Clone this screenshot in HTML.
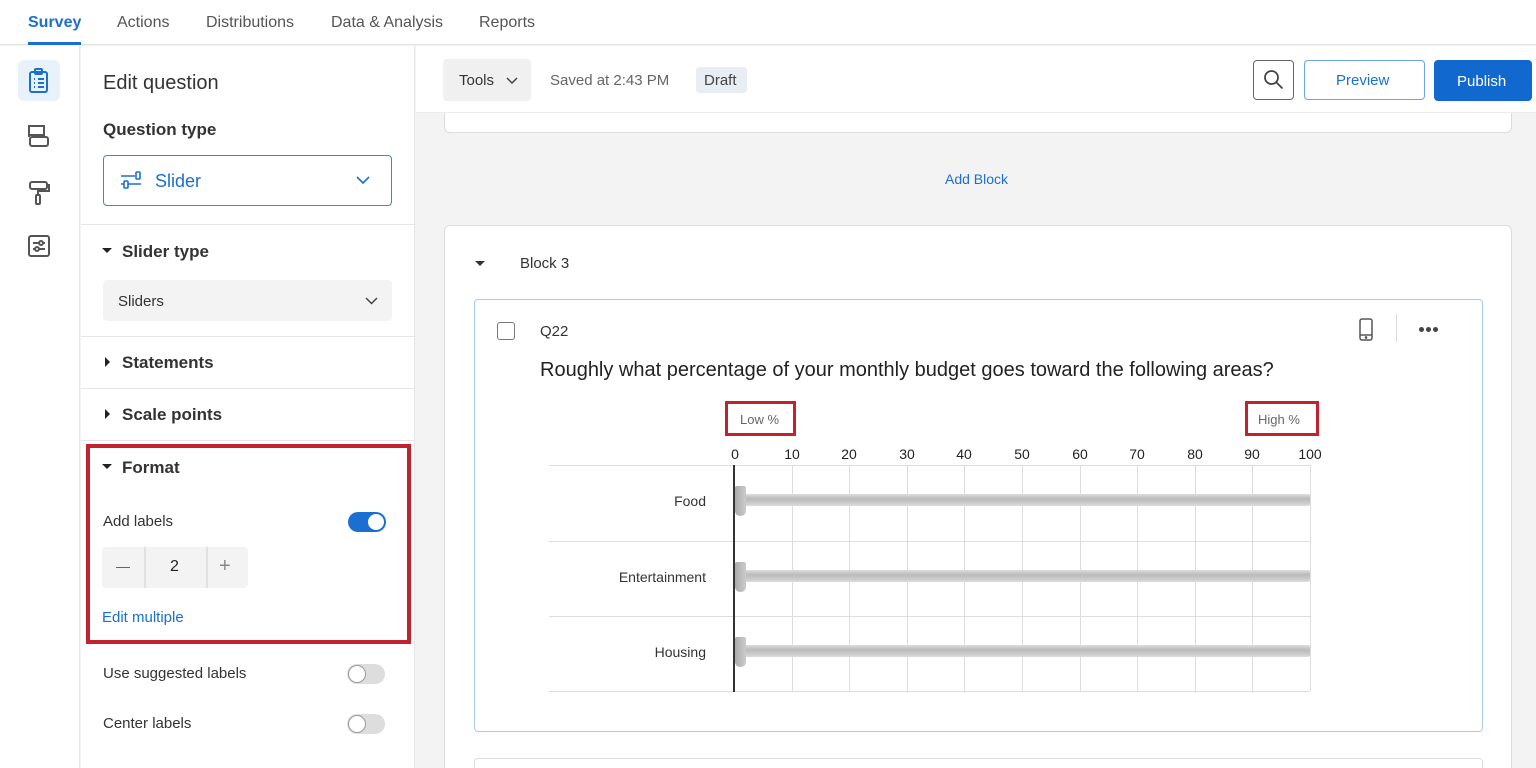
<!DOCTYPE html>
<html style="width:1536px;height:768px;overflow:hidden"><head><meta charset="utf-8"><style>
*{box-sizing:border-box;margin:0;padding:0}
body{width:1536px;height:768px;overflow:hidden;font-family:"Liberation Sans",sans-serif;color:#333;background:#f3f3f3;position:relative}
.a{position:absolute}
.t{position:absolute;white-space:nowrap}
.tog{position:absolute;width:38px;height:20px;border-radius:10px}
.tog i{position:absolute;top:2px;width:16px;height:16px;border-radius:50%;background:#fff}
.vl{position:absolute;top:465px;height:226px;width:1px;background:#ddd}
.hl{position:absolute;left:549px;width:761px;height:1px;background:#ddd}
.tr{position:absolute;left:736px;width:574px;height:12px;background:linear-gradient(#ddd,#bbb 40%,#c8c8c8 70%,#ddd);border-radius:2px}
.kn{position:absolute;left:735px;width:11px;height:30px;background:linear-gradient(90deg,#aaa,#ccc);border-radius:2px 2px 5px 5px}
.num{position:absolute;top:446px;font-size:14px;color:#222;width:30px;text-align:center}
.rl{position:absolute;right:830px;font-size:14px;color:#333}
.car{display:inline-block;width:0;height:0;border-left:5px solid transparent;border-right:5px solid transparent;border-top:5px solid #222;vertical-align:middle;margin-right:10px;position:relative;top:-2px}
.carr{display:inline-block;width:0;height:0;border-top:5px solid transparent;border-bottom:5px solid transparent;border-left:5px solid #222;vertical-align:middle;margin-right:12px;position:relative;top:-2px}
</style></head><body>
<div class="a" style="left:0;top:0;width:1536px;height:45px;background:#fff;border-bottom:1px solid #e3e3e3"></div>
<div class="t" style="left:28px;top:14px;font-size:16px;font-weight:bold;color:#1a6fd1">Survey</div>
<div class="a" style="left:28px;top:42px;width:53px;height:3px;background:#1a6fd1"></div>
<div class="t" style="left:117px;top:14px;font-size:16px;color:#555">Actions</div>
<div class="t" style="left:206px;top:14px;font-size:16px;color:#555">Distributions</div>
<div class="t" style="left:331px;top:14px;font-size:16px;color:#555">Data &amp; Analysis</div>
<div class="t" style="left:479px;top:14px;font-size:16px;color:#555">Reports</div>
<div class="a" style="left:0;top:46px;width:80px;height:722px;background:#fff;border-right:1px solid #e6e6e6"></div>
<div class="a" style="left:18px;top:60px;width:42px;height:41px;background:#e9f1fb;border-radius:6px"></div>
<svg class="a" style="left:27px;top:67px" width="24" height="28" viewBox="0 0 24 28" fill="none" stroke="#1a6fd1" stroke-width="2"><rect x="3" y="5" width="17" height="20" rx="2"/><rect x="8" y="2" width="7" height="5" rx="1"/><path d="M7 12h1M11 12h6M7 16h1M11 16h6M7 20h1M11 20h6"/></svg>
<svg class="a" style="left:27px;top:123px" width="24" height="26" viewBox="0 0 24 26" fill="none" stroke="#555" stroke-width="2"><path d="M2 14V3h15v9H2"/><rect x="3" y="14" width="18" height="9" rx="2"/></svg>
<svg class="a" style="left:28px;top:180px" width="22" height="26" viewBox="0 0 22 26" fill="none" stroke="#555" stroke-width="2"><rect x="2" y="2" width="17" height="7" rx="2"/><path d="M19 5h2v6H10v4"/><rect x="8" y="15" width="4" height="9" rx="1"/></svg>
<svg class="a" style="left:28px;top:235px" width="22" height="22" viewBox="0 0 22 22" fill="none" stroke="#555" stroke-width="2"><rect x="1" y="1" width="20" height="20" rx="2"/><path d="M5 8h12M5 14h12"/><circle cx="13" cy="8" r="2" fill="#fff"/><circle cx="9" cy="14" r="2" fill="#fff"/></svg>
<div class="a" style="left:81px;top:46px;width:334px;height:722px;background:#fff;border-right:1px solid #e6e6e6"></div>
<div class="t" style="left:103px;top:72px;font-size:20px;color:#333">Edit question</div>
<div class="t" style="left:103px;top:120px;font-size:17px;font-weight:bold;color:#333">Question type</div>
<div class="a" style="left:103px;top:155px;width:289px;height:51px;border:1.5px solid #3b86dc;border-radius:4px"></div>
<svg class="a" style="left:120px;top:170px" width="22" height="20" viewBox="0 0 22 20" fill="none" stroke="#1a6fd1" stroke-width="1.6"><path d="M1 6h14M1 14h3M8 14h13"/><rect x="16" y="2" width="4" height="7" rx="1"/><rect x="4" y="11" width="4" height="7" rx="1"/></svg>
<div class="t" style="left:155px;top:171px;font-size:18px;color:#1a6fd1">Slider</div>
<svg class="a" style="left:356px;top:176px" width="14" height="9" viewBox="0 0 14 9" fill="none" stroke="#1a6fd1" stroke-width="1.6"><path d="M1 1l6 6 6-6"/></svg>
<div class="a" style="left:81px;top:224px;width:334px;height:1px;background:#e6e6e6"></div>
<div class="t" style="left:102px;top:242px;font-size:17px;font-weight:bold"><span class="car"></span>Slider type</div>
<div class="a" style="left:103px;top:280px;width:289px;height:41px;background:#f3f3f3;border-radius:4px"></div>
<div class="t" style="left:118px;top:293px;font-size:15px;color:#333">Sliders</div>
<svg class="a" style="left:365px;top:297px" width="13" height="8" viewBox="0 0 13 8" fill="none" stroke="#444" stroke-width="1.5"><path d="M1 1l5.5 5.5L12 1"/></svg>
<div class="a" style="left:81px;top:336px;width:334px;height:1px;background:#e6e6e6"></div>
<div class="t" style="left:105px;top:353px;font-size:17px;font-weight:bold"><span class="carr"></span>Statements</div>
<div class="a" style="left:81px;top:388px;width:334px;height:1px;background:#e6e6e6"></div>
<div class="t" style="left:105px;top:405px;font-size:17px;font-weight:bold"><span class="carr"></span>Scale points</div>
<div class="a" style="left:81px;top:440px;width:334px;height:1px;background:#e6e6e6"></div>
<div class="a" style="left:86px;top:444px;width:325px;height:200px;border:4px solid #c4212f"></div>
<div class="t" style="left:102px;top:458px;font-size:17px;font-weight:bold"><span class="car"></span>Format</div>
<div class="t" style="left:103px;top:513px;font-size:15px">Add labels</div>
<div class="tog" style="left:348px;top:512px;background:#1a6fd1"><i style="left:20px"></i></div>
<div class="a" style="left:102px;top:547px;width:146px;height:41px;background:#f3f3f3;border-radius:4px"></div>
<div class="a" style="left:144px;top:547px;width:2px;height:41px;background:#e0e0e0"></div>
<div class="a" style="left:206px;top:547px;width:2px;height:41px;background:#e0e0e0"></div>
<div class="a" style="left:116px;top:567px;width:14px;height:1px;background:#666"></div>
<div class="t" style="left:170px;top:558px;font-size:16px;color:#222">2</div>
<div class="t" style="left:219px;top:555px;font-size:20px;color:#888;font-weight:300">+</div>
<div class="t" style="left:102px;top:609px;font-size:15px;color:#1a6fd1">Edit multiple</div>
<div class="t" style="left:103px;top:665px;font-size:15px">Use suggested labels</div>
<div class="tog" style="left:347px;top:664px;background:#ddd"><i style="left:1px;top:1px;width:18px;height:18px;border:1px solid #999"></i></div>
<div class="t" style="left:103px;top:715px;font-size:15px">Center labels</div>
<div class="tog" style="left:347px;top:714px;background:#ddd"><i style="left:1px;top:1px;width:18px;height:18px;border:1px solid #999"></i></div>
<div class="a" style="left:444px;top:100px;width:1068px;height:33px;background:#fff;border:1px solid #ddd;border-top:none;border-radius:0 0 6px 6px"></div>
<div class="a" style="left:416px;top:46px;width:1120px;height:67px;background:#fff;border-bottom:1px solid #ececec"></div>
<div class="a" style="left:443px;top:59px;width:88px;height:42px;background:#f0f0f0;border-radius:4px"></div>
<div class="t" style="left:459px;top:72px;font-size:15px">Tools</div>
<svg class="a" style="left:506px;top:77px" width="12" height="7" viewBox="0 0 12 7" fill="none" stroke="#444" stroke-width="1.5"><path d="M1 1l5 5 5-5"/></svg>
<div class="t" style="left:550px;top:72px;font-size:15px;color:#666">Saved at 2:43 PM</div>
<div class="a" style="left:696px;top:67px;width:51px;height:26px;background:#e9eef5;border-radius:3px"></div>
<div class="t" style="left:704px;top:72px;font-size:15px;color:#444">Draft</div>
<div class="a" style="left:1253px;top:60px;width:41px;height:40px;border:1.5px solid #666;border-radius:4px"></div>
<svg class="a" style="left:1262px;top:68px" width="24" height="24" viewBox="0 0 24 24" fill="none" stroke="#444" stroke-width="1.8"><circle cx="9.5" cy="9.5" r="6.5"/><path d="M14.5 14.5l6 6"/></svg>
<div class="a" style="left:1304px;top:60px;width:121px;height:40px;border:1.5px solid #6aa3e6;border-radius:4px"></div>
<div class="t" style="left:1336px;top:72px;font-size:15px;color:#1a6fd1">Preview</div>
<div class="a" style="left:1434px;top:60px;width:98px;height:41px;background:#1169d0;border-radius:4px"></div>
<div class="t" style="left:1457px;top:73px;font-size:15px;color:#fff">Publish</div>
<div class="t" style="left:945px;top:171px;font-size:14px;color:#1a6fd1">Add Block</div>
<div class="a" style="left:444px;top:225px;width:1068px;height:560px;background:#fff;border:1px solid #ddd;border-radius:6px"></div>
<div class="a" style="left:475px;top:261px;width:0;height:0;border-left:5px solid transparent;border-right:5px solid transparent;border-top:5px solid #333"></div>
<div class="t" style="left:520px;top:255px;font-size:15px;color:#333">Block 3</div>
<div class="a" style="left:474px;top:299px;width:1009px;height:433px;border:1.5px solid #a9c9ef;border-radius:4px"></div>
<div class="a" style="left:497px;top:322px;width:18px;height:18px;border:1.5px solid #777;border-radius:3px"></div>
<div class="t" style="left:540px;top:323px;font-size:15px;color:#333">Q22</div>
<svg class="a" style="left:1358px;top:318px" width="16" height="24" viewBox="0 0 16 24" fill="none" stroke="#555" stroke-width="1.5"><rect x="2" y="1" width="12" height="21" rx="2"/><path d="M2 17h12"/><circle cx="8" cy="19.5" r=".6" fill="#555"/></svg>
<div class="a" style="left:1396px;top:314px;width:1px;height:28px;background:#ddd"></div>
<div class="a" style="left:1419px;top:327px;width:5px;height:5px;border-radius:50%;background:#444"></div>
<div class="a" style="left:1426px;top:327px;width:5px;height:5px;border-radius:50%;background:#444"></div>
<div class="a" style="left:1433px;top:327px;width:5px;height:5px;border-radius:50%;background:#444"></div>
<div class="t" style="left:540px;top:359px;font-size:20px;color:#222">Roughly what percentage of your monthly budget goes toward the following areas?</div>
<div class="a" style="left:725px;top:401px;width:71px;height:35px;border:3px solid #c4212f"></div>
<div class="t" style="left:740px;top:412px;font-size:13px;color:#666">Low %</div>
<div class="a" style="left:1245px;top:401px;width:74px;height:35px;border:3px solid #c4212f"></div>
<div class="t" style="left:1258px;top:412px;font-size:13px;color:#666">High %</div>
<div class="num" style="left:720px">0</div><div class="num" style="left:777px">10</div><div class="num" style="left:834px">20</div><div class="num" style="left:892px">30</div><div class="num" style="left:949px">40</div><div class="num" style="left:1007px">50</div><div class="num" style="left:1065px">60</div><div class="num" style="left:1122px">70</div><div class="num" style="left:1180px">80</div><div class="num" style="left:1237px">90</div><div class="num" style="left:1295px">100</div>
<div class="hl" style="top:465px"></div><div class="hl" style="top:541px"></div><div class="hl" style="top:616px"></div><div class="hl" style="top:691px"></div>
<div class="vl" style="left:792px"></div><div class="vl" style="left:849px"></div><div class="vl" style="left:907px"></div><div class="vl" style="left:964px"></div><div class="vl" style="left:1022px"></div><div class="vl" style="left:1080px"></div><div class="vl" style="left:1137px"></div><div class="vl" style="left:1195px"></div><div class="vl" style="left:1252px"></div><div class="vl" style="left:1310px"></div>
<div class="tr" style="top:494px"></div><div class="tr" style="top:570px"></div><div class="tr" style="top:645px"></div>
<div class="kn" style="top:486px"></div><div class="kn" style="top:562px"></div><div class="kn" style="top:637px"></div>
<div class="a" style="left:733px;top:465px;width:2px;height:227px;background:#333"></div>
<div class="rl" style="top:493px">Food</div>
<div class="rl" style="top:569px">Entertainment</div>
<div class="rl" style="top:644px">Housing</div>
<div class="a" style="left:474px;top:758px;width:1009px;height:20px;background:#fff;border:1px solid #ddd;border-radius:4px"></div>
</body></html>
